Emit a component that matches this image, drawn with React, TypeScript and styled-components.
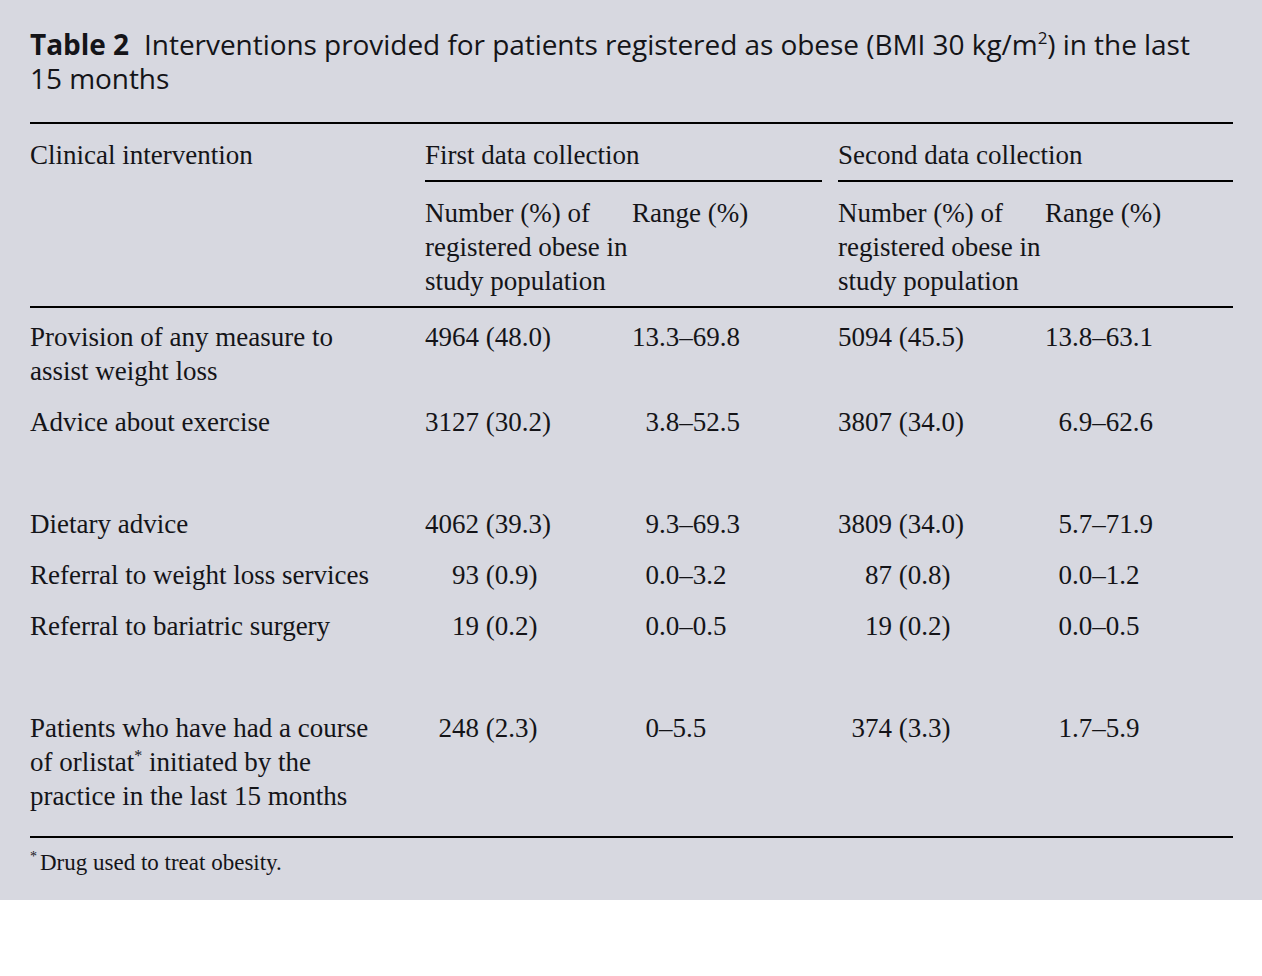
import React from 'react';
import styled, { createGlobalStyle } from 'styled-components';

const GlobalStyle = createGlobalStyle`
	html, body {
		margin: 0;
		padding: 0;
		background: #ffffff;
	}
`;

const COLUMNS = '395px 207px 206px 207px 188px';

const Page = styled.div`
	width: 1262px;
	height: 900px;
	box-sizing: border-box;
	padding: 27px 29px 0 30px;
	background-color: #d7d8e0;
	color: #141418;
`;

const Title = styled.h1`
	margin: 0 0 27px;
	font-family: 'Open Sans', 'Noto Sans', sans-serif;
	font-size: 28px;
	font-weight: 400;
	line-height: 34px;
	letter-spacing: -0.05px;
	b {
		font-weight: 700;
		margin-right: 8px;
	}
	sup {
		font-size: 17px;
		line-height: 0;
		vertical-align: 11px;
	}
`;

const Table = styled.div`
	border-top: 2px solid #000;
	border-bottom: 2px solid #000;
	font-family: 'Liberation Serif', 'Times New Roman', serif;
	font-size: 27px;
	line-height: 34px;
`;

const Row = styled.div<{ $pt?: number; $pb?: number; $rule?: boolean; $after?: number }>`
	display: grid;
	grid-template-columns: ${COLUMNS};
	padding-top: ${(p) => p.$pt ?? 8}px;
	padding-bottom: ${(p) => p.$pb ?? 9}px;
	margin-bottom: ${(p) => p.$after ?? 0}px;
	border-bottom: ${(p) => (p.$rule ? '2px solid #000' : '0')};
`;

const GroupHead = styled.div<{ $gap?: number }>`
	grid-column: span 2;
	margin-right: ${(p) => p.$gap ?? 0}px;
	padding-bottom: 8px;
	margin-bottom: -8px;
	border-bottom: 2px solid #000;
	white-space: nowrap;
`;

const Cell = styled.div<{ $indent?: number }>`
	padding-left: ${(p) => (p.$indent ?? 0) * 0.5}em;
	white-space: nowrap;
`;

const Body = styled.div`
	padding: 4px 0 14px;
`;

const Star = styled.sup`
	font-size: 16px;
	line-height: 0;
`;

const Footnote = styled.p`
	margin: 12px 0 0;
	font-family: 'Liberation Serif', 'Times New Roman', serif;
	font-size: 23px;
	line-height: 26px;
	${Star} {
		font-size: 14px;
		margin-right: 3px;
	}
`;

type DataRow = {
	label: React.ReactNode;
	values: [string, number][];
	after?: number;
};

const rows: DataRow[] = [
	{
		label: (
			<>
				Provision of any measure to
				<br />
				assist weight loss
			</>
		),
		values: [
			['4964 (48.0)', 0],
			['13.3–69.8', 0],
			['5094 (45.5)', 0],
			['13.8–63.1', 0],
		],
	},
	{
		label: 'Advice about exercise',
		values: [
			['3127 (30.2)', 0],
			['3.8–52.5', 1],
			['3807 (34.0)', 0],
			['6.9–62.6', 1],
		],
		after: 51,
	},
	{
		label: 'Dietary advice',
		values: [
			['4062 (39.3)', 0],
			['9.3–69.3', 1],
			['3809 (34.0)', 0],
			['5.7–71.9', 1],
		],
	},
	{
		label: 'Referral to weight loss services',
		values: [
			['93 (0.9)', 2],
			['0.0–3.2', 1],
			['87 (0.8)', 2],
			['0.0–1.2', 1],
		],
	},
	{
		label: 'Referral to bariatric surgery',
		values: [
			['19 (0.2)', 2],
			['0.0–0.5', 1],
			['19 (0.2)', 2],
			['0.0–0.5', 1],
		],
		after: 51,
	},
	{
		label: (
			<>
				Patients who have had a course
				<br />
				of orlistat<Star>*</Star> initiated by the
				<br />
				practice in the last 15 months
			</>
		),
		values: [
			['248 (2.3)', 1],
			['0–5.5', 1],
			['374 (3.3)', 1],
			['1.7–5.9', 1],
		],
	},
];

const SubHead: React.FC = () => (
	<Cell>
		Number (%) of
		<br />
		registered obese in
		<br />
		study population
	</Cell>
);

const App: React.FC = () => {
	return (
		<Page>
			<GlobalStyle />
			<Title>
				<b>Table 2</b> Interventions provided for patients registered as obese (BMI 30 kg/m
				<sup>2</sup>) in the last
				<br />
				15 months
			</Title>
			<Table>
				<Row $pt={14} $pb={8}>
					<Cell>Clinical intervention</Cell>
					<GroupHead $gap={16}>First data collection</GroupHead>
					<GroupHead>Second data collection</GroupHead>
				</Row>
				<Row $pt={14} $pb={8} $rule>
					<Cell />
					<SubHead />
					<Cell>Range (%)</Cell>
					<SubHead />
					<Cell>Range (%)</Cell>
				</Row>
				<Body>
					{rows.map((row, i) => (
						<Row key={i} $after={row.after}>
							<Cell>{row.label}</Cell>
							{row.values.map(([text, indent], j) => (
								<Cell key={j} $indent={indent}>
									{text}
								</Cell>
							))}
						</Row>
					))}
				</Body>
			</Table>
			<Footnote>
				<Star>*</Star>Drug used to treat obesity.
			</Footnote>
		</Page>
	);
};

export default App;
